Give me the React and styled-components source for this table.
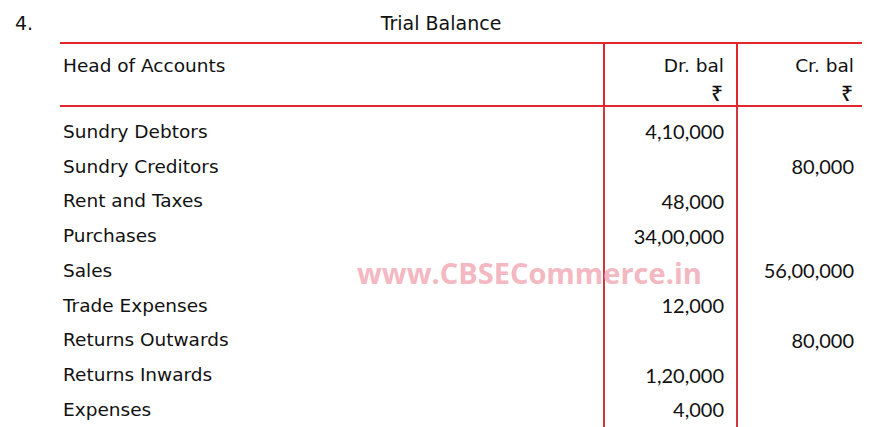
import React from "react";
import styled, { createGlobalStyle } from "styled-components";

const Global = createGlobalStyle`
  html, body { margin: 0; padding: 0; background: #fff; }
  body { width: 875px; height: 427px; overflow: hidden; }
`;

const RED = "#e2262b";
const RED_DARK = "#d0363b";
const HAND = `"DejaVu Sans", "Noto Sans", sans-serif`;
const NUM = `Lato, "Open Sans", sans-serif`;

const Page = styled.div`
  position: relative;
  width: 875px;
  height: 427px;
  overflow: hidden;
  color: #111;
`;

const TitleRow = styled.div`
  display: grid;
  grid-template-columns: 50px 1fr 58px;
  height: 43px;
  align-items: center;
  padding-left: 15px;
  padding-top: 2px;
  box-sizing: border-box;
  font-family: ${HAND};
  font-size: 19px;
`;

const Num = styled.span``;

const Title = styled.div`
  text-align: center;
`;

const Table = styled.div`
  margin-left: 60px;
  width: 802px;
  border-top: 2px solid ${RED};
  display: grid;
  grid-template-columns: 543px 133px 126px;
  margin-top: -1px;
`;

const HeadCell = styled.div`
  border-bottom: 2px solid ${RED};
  border-left: ${(p) => (p.$line ? `2px solid ${RED}` : "none")};
  display: flex;
  flex-direction: column;
  align-items: ${(p) => (p.$right ? "flex-end" : "flex-start")};
  padding: 9px ${(p) => p.$pr || 0}px 0 3px;
  box-sizing: border-box;
  height: 63px;
  font-family: ${HAND};
  font-size: 18.5px;
  line-height: 26px;
`;

const Rupee = styled.span`
  font-family: "Noto Sans", "DejaVu Sans", sans-serif;
  font-size: 21px;
  font-weight: 500;
  line-height: 28px;
  margin-right: 1px;
`;

const Col = styled.div`
  border-left: ${(p) => (p.$line ? `2px solid ${RED_DARK}` : "none")};
  padding: 7px ${(p) => p.$pr || 0}px 40px 3px;
  display: flex;
  flex-direction: column;
  align-items: ${(p) => (p.$right ? "flex-end" : "flex-start")};
`;

const Cell = styled.div`
  height: 34.75px;
  display: flex;
  align-items: center;
  font-family: ${(p) => (p.$num ? NUM : HAND)};
  font-size: ${(p) => (p.$num ? "20px" : "18.5px")};
  white-space: nowrap;
`;

const Watermark = styled.div`
  position: absolute;
  left: 357px;
  top: 253px;
  font-family: "Open Sans", sans-serif;
  font-weight: 700;
  font-size: 29px;
  color: #f4b8c2;
  pointer-events: none;
`;

const rows = [
  ["Sundry Debtors", "4,10,000", ""],
  ["Sundry Creditors", "", "80,000"],
  ["Rent and Taxes", "48,000", ""],
  ["Purchases", "34,00,000", ""],
  ["Sales", "", "56,00,000"],
  ["Trade Expenses", "12,000", ""],
  ["Returns Outwards", "", "80,000"],
  ["Returns Inwards", "1,20,000", ""],
  ["Expenses", "4,000", ""],
];

export default function App() {
  return (
    <Page>
      <Global />
      <TitleRow>
        <Num>4.</Num>
        <Title>Trial Balance</Title>
        <span />
      </TitleRow>
      <Table>
        <HeadCell>Head of Accounts</HeadCell>
        <HeadCell $line $right $pr={12}>
          <span>Dr. bal</span>
          <Rupee>₹</Rupee>
        </HeadCell>
        <HeadCell $line $right $pr={8}>
          <span>Cr. bal</span>
          <Rupee>₹</Rupee>
        </HeadCell>
        <Col>
          {rows.map((r) => (
            <Cell key={r[0]}>{r[0]}</Cell>
          ))}
        </Col>
        <Col $line $right $pr={12}>
          {rows.map((r) => (
            <Cell $num key={r[0]}>{r[1]}</Cell>
          ))}
        </Col>
        <Col $line $right $pr={8}>
          {rows.map((r) => (
            <Cell $num key={r[0]}>{r[2]}</Cell>
          ))}
        </Col>
      </Table>
      <Watermark>www.CBSECommerce.in</Watermark>
    </Page>
  );
}
